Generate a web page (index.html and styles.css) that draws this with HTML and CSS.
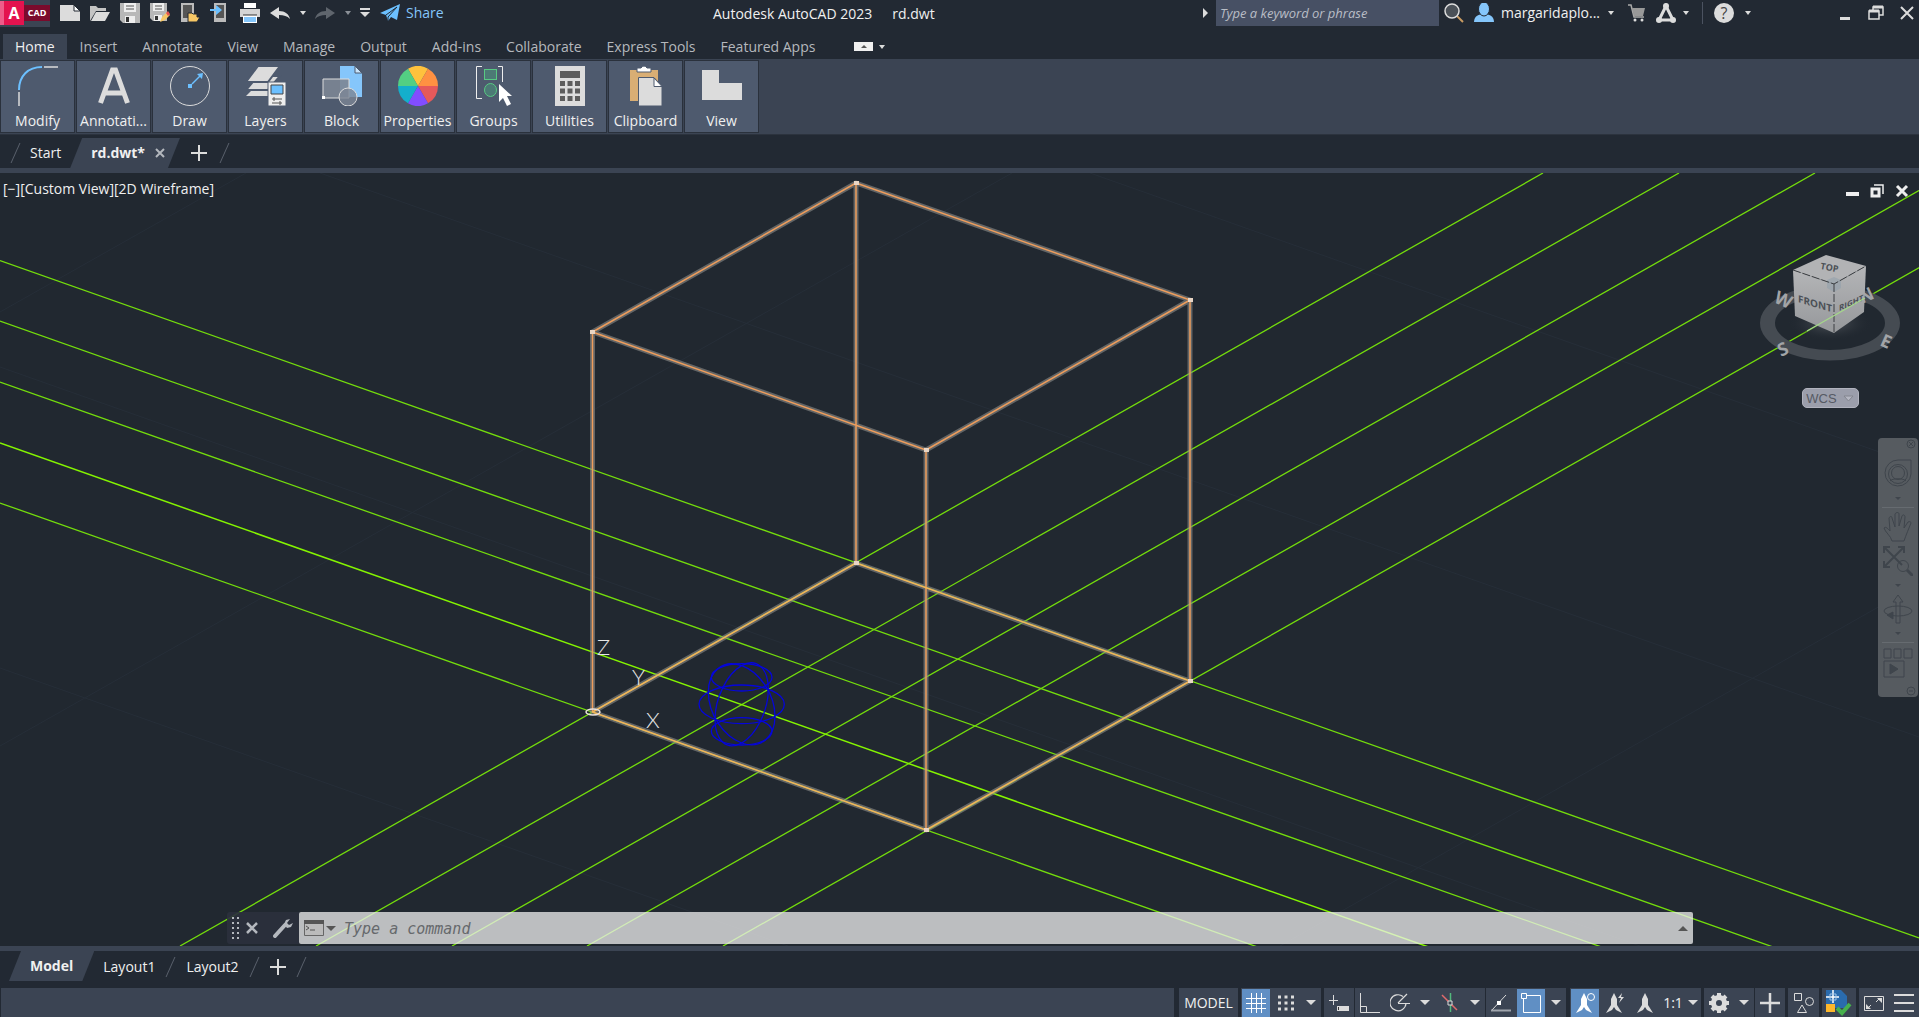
FILE: index.html
```
<!DOCTYPE html>
<html lang="en">
<head>
    <meta charset="UTF-8">
    <meta name="viewport" content="width=device-width, initial-scale=1.0">
    <title>Autodesk AutoCAD 2023 rd.dwt</title>
    <link rel="stylesheet" href="styles.css">
</head>
<body>
    <header class="titlebar">
        <div class="quick-access">
            <button class="app-btn" aria-label="Application menu"><span class="app-a">A</span><span class="app-cad">CAD</span></button>
            <button aria-label="New"><svg width="20" height="20" viewBox="0 0 20 20"><path d="M0 2h14l6 6v10H0z" fill="#dcdcdc"/><path d="M14 2v6h6z" fill="#fff" stroke="#222933"/></svg></button>
            <button aria-label="Open"><svg width="20" height="20" viewBox="0 0 20 20"><path d="M0 18V3h6l2 2h8v3H6z" fill="#c4c4c4"/><path d="M6 9h14l-5 9H1z" fill="#dcdcdc"/></svg></button>
            <button aria-label="Save"><svg width="20" height="20" viewBox="0 0 20 20"><path d="M0 0h20v20H3l-3-3z" fill="#b8b8b8"/><path d="M4 0h12v9H4zM5 13h10v7H5z" fill="#eee"/><path d="M6 3h8M6 6h8" stroke="#555" /><path d="M6 14h3v5H6z" fill="#333"/></svg></button>
            <button aria-label="Save as"><svg width="20" height="20" viewBox="0 0 20 20"><path d="M0 0h17v18H3l-3-3z" fill="#b8b8b8"/><path d="M3 0h11v8H3zM4 12h8v6H4z" fill="#eee"/><path d="M5 3h7M5 6h7" stroke="#555"/><path d="M5 13h3v4H5z" fill="#333"/><path d="M10 19l2-5 5-5 3 3-5 5z" fill="#f7c765"/><path d="M16 10l2-2 2 3-2 2z" fill="#e5524f"/></svg></button>
            <button aria-label="Open from web"><svg width="20" height="20" viewBox="0 0 20 20"><path d="M1 0h13v19H1z" fill="#bbb"/><path d="M3 2h9v13H3z" fill="#555"/><path d="M8 19v-9h4l1 1h4v3h3l-3 5z" fill="#f7c765" stroke="#222933"/></svg></button>
            <button aria-label="Save to web"><svg width="20" height="20" viewBox="0 0 20 20"><path d="M4 0h12v19H4z" fill="#bbb"/><path d="M6 2h8v13H6z" fill="#555"/><path d="M0 6h6V2l6 5-6 5V8H0z" fill="#6cc0ff"/></svg></button>
            <button aria-label="Plot"><svg width="20" height="20" viewBox="0 0 20 20"><path d="M4 0h12v5H4z" fill="#fff"/><path d="M0 6h20v8H0z" fill="#d4d4d4"/><path d="M3 12h14v8H3z" fill="#fff"/><path d="M4 14h12v5H4z" fill="#85c6fb"/><path d="M3 12h14" stroke="#333"/></svg></button>
            <button aria-label="Undo"><svg width="20" height="20" viewBox="0 0 20 20"><path d="M0 10l9-6v4c6 0 10 3 11 8-3-3-6-4-11-4v4z" fill="#dcdcdc"/></svg></button>
            <button class="mini" aria-label="Undo list"><span class="caret"></span></button>
            <button aria-label="Redo"><svg width="20" height="20" viewBox="0 0 20 20"><path d="M20 10l-9-6v4C5 8 1 11 0 16c3-3 6-4 11-4v4z" fill="#5f656d"/></svg></button>
            <button class="mini" aria-label="Redo list"><span class="caret dim"></span></button>
            <button class="mini" aria-label="Customize toolbar"><svg width="10" height="10" viewBox="0 0 10 10"><path d="M0 1h10" stroke="#dcdcdc" stroke-width="2"/><path d="M0 4h10L5 9z" fill="#dcdcdc"/></svg></button>
            <button class="share"><svg width="20" height="20" viewBox="0 0 20 20"><path d="M0 10L20 1l-3 16-6-3-3 4-2-6z" fill="#6cc0ff"/><path d="M6 12L17 4 8 14v4" fill="none" stroke="#222933"/></svg>Share</button>
        </div>
        <div class="window-title"><span>Autodesk AutoCAD 2023</span><span>rd.dwt</span></div>
        <div class="infocenter">
            <span class="play"></span>
            <input class="search" type="text" aria-label="Search" placeholder="Type a keyword or phrase">
            <button class="find" aria-label="Find"><svg width="20" height="20" viewBox="0 0 20 20"><path d="M13 13l6 6" stroke="#c99b63" stroke-width="2"/><circle cx="8" cy="8" r="7" fill="#4b5158" stroke="#dcdcdc" stroke-width="1.5"/></svg></button>
            <button class="account"><svg width="20" height="20" viewBox="0 0 20 20"><path d="M0 19c0-6 5-8 10-8s10 2 10 8z" fill="#85c6fb"/><ellipse cx="10" cy="6" rx="5.500" ry="7" fill="#85c6fb" stroke="#222933"/></svg><span class="account-name">margaridaplo...</span><span class="caret"></span></button>
            <button class="cart" aria-label="App store"><svg width="18" height="20" viewBox="0 0 18 20"><path d="M0 2h3l3 12h10" fill="none" stroke="#aaa" stroke-width="1.500"/><path d="M4 5h13l-2 8H6z" fill="#999"/><circle cx="7" cy="17" r="1.500" fill="#ddd"/><circle cx="14" cy="17" r="1.500" fill="#ddd"/></svg></button>
            <button class="adsk" aria-label="Autodesk"><svg width="20" height="20" viewBox="0 0 20 20"><path d="M10 3L3 17h14z" fill="none" stroke="#dcdcdc" stroke-width="3"/><circle cx="10" cy="3" r="3" fill="#dcdcdc"/><circle cx="3" cy="17" r="3" fill="#dcdcdc"/><circle cx="17" cy="17" r="3" fill="#dcdcdc"/></svg><span class="caret"></span></button>
            <button class="help" aria-label="Help"><span class="help-mark">?</span><span class="caret"></span></button>
        </div>
        <div class="window-buttons">
            <button aria-label="Minimize"><svg width="16" height="16" viewBox="0 0 16 16"><path d="M3 12h10v3H3z" fill="#dcdcdc"/></svg></button>
            <button aria-label="Restore"><svg width="16" height="16" viewBox="0 0 16 16"><path d="M5 5V2h10v8h-4M1 6h10v8H1z" fill="none" stroke="#dcdcdc" stroke-width="1.500"/><path d="M5 2h10M1 6h10" stroke="#dcdcdc" stroke-width="3"/></svg></button>
            <button aria-label="Close"><svg width="16" height="16" viewBox="0 0 16 16"><path d="M2 2l12 12M14 2L2 14" stroke="#dcdcdc" stroke-width="2"/></svg></button>
        </div>
    </header>

    <nav class="ribbon-tabs">
        <button class="active">Home</button>
        <button>Insert</button>
        <button>Annotate</button>
        <button>View</button>
        <button>Manage</button>
        <button>Output</button>
        <button>Add-ins</button>
        <button>Collaborate</button>
        <button>Express Tools</button>
        <button>Featured Apps</button>
        <button class="ribbon-toggle" aria-label="Minimize ribbon"><svg width="19" height="9" viewBox="0 0 19 9"><path d="M0 0h19v9H0z" fill="#f0f0f0"/><path d="M7 6h6L10 3z" fill="#555"/></svg><span class="caret"></span></button>
    </nav>

    <section class="ribbon">
        <button><svg width="40" height="40" viewBox="0 0 40 40" fill="none"><path d="M1 24C1 10 10 1 24 1" stroke="#6cc0ff" stroke-width="2"/><path d="M1 26v14M26 1h14" stroke="#dcdcdc" stroke-width="1.500"/></svg><span>Modify</span></button>
        <button><svg width="40" height="40" viewBox="0 0 40 40"><path d="M6.500 37L18.500 4h3l12 33M11 27h19" fill="none" stroke="#dcdcdc" stroke-width="5"/></svg><span>Annotati...</span></button>
        <button><svg width="40" height="40" viewBox="0 0 40 40"><circle cx="20" cy="20" r="19.500" fill="none" stroke="#dcdcdc"/><path d="M22 18l8-8" stroke="#6cc0ff" stroke-width="1.500"/><path d="M18 18h4v4h-4zM33 7l-1 6-5-5z" fill="#6cc0ff"/></svg><span>Draw</span></button>
        <button><svg width="40" height="40" viewBox="0 0 40 40"><path d="M12 18h22L22 30H0z" fill="#dcdcdc"/><path d="M12 10h22L22 24H0z" fill="#dcdcdc" stroke="#4e5a6e" stroke-width="2"/><path d="M12 0h22L22 16H0z" fill="#dcdcdc" stroke="#4e5a6e" stroke-width="2"/><path d="M22 16h18v24H22z" fill="#eee" stroke="#4e5a6e"/><path d="M25 19h12v9H25z" fill="#6cc0ff" stroke="#444"/><path d="M26 33h10M26 37h10M28 31v4M34 35v4" stroke="#555"/></svg><span>Layers</span></button>
        <button><svg width="40" height="40" viewBox="0 0 40 40"><path d="M18 0h15l7 7v24H18z" fill="#85c6fb"/><path d="M33 0v7h7z" fill="#c7e4fb" stroke="#4e5a6e"/><path d="M1 13h26v19H1z" fill="#7c8594" fill-opacity=".9" stroke="#dcdcdc"/><circle cx="26" cy="31" r="9" fill="#7c8594" fill-opacity=".8" stroke="#dcdcdc"/><path d="M0 30h3v3H0z" fill="#fff"/></svg><span>Block</span></button>
        <button><svg width="40" height="40" viewBox="0 0 40 40"><path d="M20 20L10 2.700A20 20 0 0 1 30 2.700z" fill="#ffc23d"/><path d="M20 20L30 2.700A20 20 0 0 1 40 20z" fill="#ff9142"/><path d="M20 20H40A20 20 0 0 1 30 37.300z" fill="#e5595b"/><path d="M20 20L30 37.300A20 20 0 0 1 10 37.300z" fill="#824dff"/><path d="M20 20L10 37.300A20 20 0 0 1 0 20z" fill="#14afcc"/><path d="M20 20H0A20 20 0 0 1 10 2.700z" fill="#53cf83"/></svg><span>Properties</span></button>
        <button><svg width="40" height="40" viewBox="0 0 40 40"><path d="M8 .5H2.500v32H8M24 .5h4.500V16" fill="none" stroke="#eee"/><rect x="10.500" y="3.500" width="12" height="10" fill="#4c7a75" stroke="#58ca83"/><ellipse cx="16.500" cy="24" rx="6" ry="6.500" fill="#4c7a75" stroke="#58ca83"/><path d="M25 18v18l4-4 4 8 4-2-4-8h5z" fill="#fff"/></svg><span>Groups</span></button>
        <button><svg width="40" height="40" viewBox="0 0 40 40"><path d="M5 0h30v40H5z" fill="#dcdcdc"/><path d="M10 5h20v7H10zM10 15h5v5h-5zM17.500 15h5v5h-5zM25 15h5v5h-5zM10 22.500h5v5h-5zM17.500 22.500h5v5h-5zM25 22.500h5v5h-5zM10 30h5v5h-5zM17.500 30h5v5h-5zM25 30h5v5h-5z" fill="#5c5c5c"/></svg><span>Utilities</span></button>
        <button><svg width="40" height="40" viewBox="0 0 40 40"><path d="M4 4h28v31H4z" fill="#d9ae74"/><path d="M11 6V2h4q3-4 6 0h4v4z" fill="#fff" stroke="#4e5a6e"/><path d="M12.500 11.500H28l8 9V40H12.500z" fill="#dcdcdc" stroke="#4e5a6e"/><path d="M28 12v8.500h8z" fill="#fff" stroke="#4e5a6e"/></svg><span>Clipboard</span></button>
        <button><svg width="40" height="40" viewBox="0 0 40 40"><path d="M0 4h17v13h23v17H0z" fill="#dcdcdc"/></svg><span>View</span></button>
    </section>

    <nav class="file-tabs">
        <i class="slash"></i>
        <button class="start">Start</button>
        <div class="file-tab"><button>rd.dwt*</button><button aria-label="Close drawing"><svg width="10" height="10" viewBox="0 0 10 10"><path d="M1 1l8 8M9 1L1 9" stroke="#b4b8be" stroke-width="2"/></svg></button></div>
        <button class="add" aria-label="New drawing"><svg width="16" height="16" viewBox="0 0 16 16"><path d="M8 0v16M0 8h16" stroke="#dcdcdc" stroke-width="2"/></svg></button>
        <i class="slash"></i>
    </nav>

    <main class="viewport">
        <svg class="drawing" viewBox="0 173 1919 773" preserveAspectRatio="xMidYMid slice" fill="none">
            <!-- background grid -->
            <g stroke="#262e38">
                <path d="M0 746L1012 173M1280 946L1919 584M0 312L246 173M320 173L1919 737M1090 173L1919 466M0 668L788 946M0 367L1640 946"/>
            </g>
            <!-- construction lines -->
            <g stroke="#74dd0c" stroke-width="1.300">
                <path d="M0 260.500L1919 938M0 321L1919 998.500M0 382L1919 1059M0 503L1919 1180.500"/>
                <path d="M180 946L1543 173M316 946L1679 173M452 946L1815 173M587 946L1950 173M723 946L2086 173"/>
                <path d="M0 443L1919 1120" stroke="#85f500" stroke-width="1.500"/>
            </g>
            <!-- sphere -->
            <g transform="translate(560 620) scale(.33333)" stroke="#0505dc" stroke-width="1.300">
                <ellipse cx="545" cy="172" rx="91" ry="41" vector-effect="non-scaling-stroke"/>
                <ellipse cx="545" cy="253" rx="128" ry="58" vector-effect="non-scaling-stroke"/>
                <ellipse cx="545" cy="334" rx="91" ry="41" vector-effect="non-scaling-stroke"/>
                <circle r="1" transform="matrix(80 -45 0 -116 545 253)" vector-effect="non-scaling-stroke"/>
                <circle r="1" transform="matrix(-100 -36 0 116 545 253)" vector-effect="non-scaling-stroke"/>
            </g>
            <!-- selected cube -->
            <g stroke-linejoin="round">
                <path d="M592.500 332L856 183L1190 300L926 450zM592.500 712L856 563L1190 681L926 830zM592.500 332V712M856 183V563M1190 300V681M926 450V830" stroke="#8d8d8b" stroke-opacity=".6" stroke-width="5"/>
                <path d="M592.500 332L856 183L1190 300L926 450zM592.500 332V712M856 183V563M1190 300V681M926 450V830" stroke="#ee9d5c" stroke-width="1.500"/>
                <path d="M592.500 712L856 563L1190 681L926 830z" stroke="#f2b45a" stroke-width="1.500"/>
                <path d="M590 332h5M854 183h5M1188 300h5M924 450h5M854 563h5M1188 681h5M924 830h5" stroke="#e8d5c5" stroke-width="4"/>
            </g>
            <ellipse cx="593" cy="712" rx="7" ry="3" stroke="#e8e0dc" stroke-width="1.500"/>
            <g class="ucs">
                <text x="597" y="655">Z</text>
                <text x="632" y="685">Y</text>
                <text x="646" y="728">X</text>
            </g>
        </svg>

        <div class="view-label">[−][Custom View][2D Wireframe]</div>

        <div class="mdi-buttons">
            <button aria-label="Minimize view"><svg width="14" height="14" viewBox="0 0 14 14"><path d="M1 8h13v4H1z" fill="#eee"/></svg></button>
            <button aria-label="Restore view"><svg width="14" height="14" viewBox="0 0 14 14" fill="none" stroke="#eee"><path d="M4 1h9v9" stroke-width="1.500"/><path d="M2 5h7v7H2z" stroke-width="3"/></svg></button>
            <button aria-label="Close view"><svg width="14" height="14" viewBox="0 0 14 14"><path d="M2 2l10 10M12 2L2 12" stroke="#eee" stroke-width="3"/></svg></button>
        </div>

        <div class="viewcube">
            <svg width="150" height="115" viewBox="0 0 150 115">
                <defs>
                    <linearGradient id="face" x1="0" y1="0" x2="0" y2="1"><stop offset="0" stop-color="#b4b5b7"/><stop offset="1" stop-color="#96989b"/></linearGradient>
                    <radialGradient id="shade"><stop offset="0" stop-color="#555a60"/><stop offset="1" stop-color="#212830" stop-opacity="0"/></radialGradient>
                </defs>
                <path fill-rule="evenodd" d="M5 73a70 37.500 0 0 1 140 0a70 37.500 0 0 1-140 0zM20 73a55 27 0 0 0 110 0a55 27 0 0 0-110 0z" fill="#454b52"/>
                <ellipse cx="75" cy="73" rx="42" ry="18" fill="url(#shade)"/>
                <g class="compass">
                    <text transform="translate(18 52) rotate(24)">W</text>
                    <text transform="translate(107 54) rotate(-24)">N</text>
                    <text transform="translate(26 107) rotate(-25)">S</text>
                    <text transform="translate(124 95) rotate(24)">E</text>
                </g>
                <path d="M38 20L71 5l40 11-32 18z" fill="#b2b3b5"/>
                <path d="M38 20l41 14v49L40 66z" fill="url(#face)"/>
                <path d="M111 16L79 34v49l30-21z" fill="url(#face)"/>
                <path d="M72 30l7-3 7 3v8l-7 4-7-4z" fill="#92a0ac" fill-opacity=".6"/>
                <path d="M38 20l41 14 32-18M79 34v49" fill="none" stroke="#3c3f43" stroke-dasharray="8 2"/>
                <g class="faces">
                    <text transform="translate(65 19) rotate(10)" font-size="9">TOP</text>
                    <text transform="translate(43 52) skewY(17)" font-size="10">FRONT</text>
                    <text transform="translate(84 61) skewY(-24)" font-size="8">RIGHT</text>
                </g>
                <path d="M52 81L110 48" stroke="#a5d88a" stroke-width="1.300"/>
            </svg>
            <button class="wcs">WCS<svg width="11" height="7" viewBox="0 0 11 7"><path d="M1 1h9L5.500 6z" fill="#b5b7c2" stroke="#83868f"/></svg></button>
        </div>

        <div class="navbar">
            <button class="corner" aria-label="Close navigation bar"><svg width="10" height="10" viewBox="0 0 10 10"><circle cx="5" cy="5" r="4"/><path d="M3 3l4 4M7 3L3 7"/></svg></button>
            <button class="wheel" aria-label="Steering wheel"><svg width="30" height="30" viewBox="0 0 30 30"><path d="M15 1h13v14a13 13 0 1 1-13-14z"/><circle cx="15" cy="15" r="9.500"/><circle cx="15" cy="14" r="6.500"/><path d="M7 22c2-3 14-3 16 0"/></svg></button>
            <span class="nav-caret"></span>
            <hr>
            <button aria-label="Pan"><svg width="30" height="30" viewBox="0 0 30 30"><path d="M9 29c-1-5-7-9-8-13 2-2 4 1 6 3L6 6c1-2 3-2 3 0l3 9V2c1-2 4-2 4 0v12l3-10c1-2 3-1 3 1l-1 11 4-6c2-1 3 0 3 1-2 5-5 12-7 18z"/></svg></button>
            <button aria-label="Zoom"><svg width="30" height="30" viewBox="0 0 30 30"><path d="M2 2l17 17M20 2L2 20M1 7V1h6M15 1h6v6M1 15v6h6" stroke-width="2"/><circle cx="20" cy="20" r="5.500"/><path d="M24 24l6 6" stroke-width="3"/></svg></button>
            <span class="nav-caret"></span>
            <button aria-label="Orbit"><svg width="30" height="30" viewBox="0 0 30 30"><ellipse cx="15" cy="17" rx="14" ry="5"/><path d="M13 29V8h-3l5-7 5 7h-3v21z"/><path d="M4 21l6-3v7z" fill="#3f454c"/></svg></button>
            <span class="nav-caret"></span>
            <hr>
            <button aria-label="ShowMotion"><svg width="30" height="32" viewBox="0 0 30 32"><path d="M1 2h7v9H1zM11 2h7v9h-7zM21 2h8v9h-8zM1 14h20v16H1z"/><path d="M7 17v10l8-5z" fill="#3f454c"/></svg></button>
            <button class="corner bottom" aria-label="Navigation bar options"><svg width="10" height="10" viewBox="0 0 10 10"><circle cx="5" cy="5" r="4"/><path d="M3 5h4"/></svg></button>
        </div>

        <div class="command">
            <div class="command-tools">
                <svg width="8" height="22" viewBox="0 0 8 22"><path d="M2 0v22M7 0v22" stroke="#b4b8be" stroke-width="2" stroke-dasharray="2 3"/></svg>
                <button aria-label="Close command line"><svg width="12" height="12" viewBox="0 0 12 12"><path d="M1 1l10 10M11 1L1 11" stroke="#b4b8be" stroke-width="2.500"/></svg></button>
                <button class="wrench" aria-label="Customize"><svg width="20" height="20" viewBox="0 0 20 20"><path d="M2 18l10-11" stroke="#b4b8be" stroke-width="4" stroke-linecap="round"/><path d="M17 1l-4 1-2 4 3 4 4-1 2-4-4 2-2-2z" fill="#b4b8be"/></svg></button>
            </div>
            <div class="command-line">
                <button aria-label="Recent commands"><svg width="20" height="16" viewBox="0 0 20 16"><path d="M.5.500h19v15H.500z" fill="#bbb" stroke="#666"/><path d="M0 0h20v4H0z" fill="#555"/><path d="M2 6l3 2-3 2M6 10h5" fill="none" stroke="#555"/></svg><span class="caret dark"></span></button>
                <input type="text" aria-label="Command" placeholder="Type a command">
                <button aria-label="Command history"><span class="caret dark up"></span></button>
            </div>
        </div>
    </main>

    <nav class="layout-tabs">
        <button class="model-tab">Model</button>
        <button>Layout1</button>
        <i class="slash"></i>
        <button>Layout2</button>
        <i class="slash"></i>
        <button class="add" aria-label="New layout"><svg width="16" height="16" viewBox="0 0 16 16"><path d="M8 0v16M0 8h16" stroke="#dcdcdc" stroke-width="2"/></svg></button>
        <i class="slash"></i>
    </nav>

    <footer class="statusbar">
        <div class="coords"></div>
        <div class="group"><button class="model">MODEL</button></div>
        <div class="group">
            <button class="on" aria-label="Grid"><svg width="20" height="20" viewBox="0 0 20 20"><path d="M5.500 0v20M10.500 0v20M15.500 0v20M0 5.500h20M0 10.500h20M0 15.500h20" stroke="#fff"/></svg></button>
            <button aria-label="Snap"><svg width="20" height="20" viewBox="0 0 20 20"><path d="M2 4h16M2 10h16M2 16h16" stroke="#dcdcdc" stroke-width="3" stroke-dasharray="3 3.500"/></svg></button>
            <button class="drop" aria-label="Snap settings"><span class="caret big"></span></button>
        </div>
        <div class="group">
            <button aria-label="Dynamic input"><svg width="20" height="20" viewBox="0 0 20 20"><path d="M4.500 2v10M0 7.500h9" stroke="#dcdcdc"/><path d="M8 13h12v5H8z" fill="#dcdcdc"/><path d="M9 14h1v3H9z" fill="#333"/></svg></button>
        </div>
        <div class="group near">
            <button aria-label="Ortho"><svg width="20" height="20" viewBox="0 0 20 20"><path d="M.5 0v19.500H20M.5 13.500h6v6" fill="none" stroke="#dcdcdc"/></svg></button>
            <button aria-label="Polar tracking"><svg width="20" height="20" viewBox="0 0 20 20"><path d="M13 3.500a8 8 0 1 0 3 7M8 10.500h12M8 10l9-9" fill="none" stroke="#dcdcdc" stroke-width="1.200"/></svg></button>
            <button class="drop" aria-label="Polar settings"><span class="caret big"></span></button>
            <button aria-label="Isodraft"><svg width="20" height="20" viewBox="0 0 20 20"><path d="M10.500 0v19" stroke="#53b97c" stroke-width="1.500"/><path d="M2 2l15 15" stroke="#e06a6c" stroke-width="1.500"/><path d="M8 8h4v4H8z" fill="#3b4453" stroke="#dcdcdc"/></svg></button>
            <button class="drop" aria-label="Isodraft settings"><span class="caret big"></span></button>
        </div>
        <div class="group near">
            <button aria-label="Object snap tracking"><svg width="20" height="20" viewBox="0 0 20 20"><path d="M1 17L15 2" stroke="#dcdcdc"/><path d="M0 17.500h20" stroke="#a0a5ad" stroke-width="2"/><path d="M6 8h4v4H6z" fill="#fff"/></svg></button>
            <button class="on" aria-label="Object snap"><svg width="20" height="20" viewBox="0 0 20 20" fill="none" stroke="#fff"><path d="M6 2.500h13.500v17H2.500V6"/><path d="M.5.500h5v5h-5z"/></svg></button>
            <button class="drop" aria-label="Object snap settings"><span class="caret big"></span></button>
        </div>
        <div class="group far">
            <button class="on" aria-label="Annotation visibility"><svg width="20" height="20" viewBox="0 0 20 20"><path d="M9 0l3 6v6l5 8-6-3-2-3-2 3-6 3 5-8V6z" fill="#fff"/><circle cx="16" cy="4" r="3.500" fill="none" stroke="#fff"/></svg></button>
            <button aria-label="Auto scale"><svg width="20" height="20" viewBox="0 0 20 20"><path d="M9 0l3 6v6l5 8-6-3-2-3-2 3-6 3 5-8V6z" fill="#dcdcdc"/><path d="M17 0l-4 5h3l-2 5 5-6h-3z" fill="#dcdcdc"/></svg></button>
            <button aria-label="Annotation scale icon"><svg width="20" height="20" viewBox="0 0 20 20"><path d="M10 0l3 6v6l5 8-6-3-2-3-2 3-6 3 5-8V6z" fill="#dcdcdc"/></svg></button>
            <button class="scale">1:1<span class="caret big"></span></button>
        </div>
        <div class="group">
            <button aria-label="Workspace"><svg width="20" height="20" viewBox="0 0 20 20"><circle cx="10" cy="10" r="5.500" fill="none" stroke="#dcdcdc" stroke-width="5"/><path d="M10 0v4M10 16v4M0 10h4M16 10h4M3 3l3 3M14 14l3 3M17 3l-3 3M6 14l-3 3" stroke="#dcdcdc" stroke-width="4"/></svg></button>
            <button class="drop" aria-label="Workspace settings"><span class="caret big"></span></button>
        </div>
        <div class="group near"><button aria-label="Annotation monitor"><svg width="20" height="20" viewBox="0 0 20 20"><path d="M10 0v20M0 10h20" stroke="#dcdcdc" stroke-width="2.500"/></svg></button></div>
        <div class="group"><button class="isolate" aria-label="Isolate objects"><svg width="20" height="20" viewBox="0 0 20 20" fill="none" stroke="#dcdcdc"><path d="M.5.500h7v7h-7zM8 12l4.500 7.500h-9z"/><circle cx="15.500" cy="8.500" r="4"/></svg></button></div>
        <div class="group"><button class="wide" aria-label="Graphics performance"><svg width="26" height="26" viewBox="0 0 26 26"><path d="M0 0h15l6 6v12H9v4H0z" fill="#2a6bad"/><path d="M0 14h9v8H0z" fill="#fdb72b"/><path d="M0 7h13M7 0v13" stroke="#fff" stroke-width="1.500"/><path d="M4 4h6v6H4z" fill="none" stroke="#9fc6ea"/><path d="M11 18l5 5 8-9" fill="none" stroke="#46b04c" stroke-width="4"/></svg></button></div>
        <div class="group">
            <button aria-label="Clean screen"><svg width="20" height="20" viewBox="0 0 20 20" fill="none" stroke="#dcdcdc"><path d="M.5 3.500h19v14H.5z"/><path d="M12 9l4-4M7 12l-4 4"/><path d="M13 5h5v5zM2 11v5h5z" fill="#dcdcdc" stroke="none"/></svg></button>
            <button aria-label="Customization"><svg width="20" height="20" viewBox="0 0 20 20"><path d="M0 2h20M0 10h20M0 18h20" stroke="#dcdcdc" stroke-width="2"/></svg></button>
        </div>
    </footer>
</body>
</html>
```
FILE: styles.css
```
* {
    box-sizing: border-box;
}
body {
    font-family: "Open Sans", "Noto Sans", sans-serif;
    font-size: 14px;
    line-height: 20px;
    color: #f0f0f0;
    background-color: #222933;
    margin: 0;
    height: 100vh;
    display: flex;
    flex-direction: column;
    overflow: hidden;
}
button {
    display: flex;
    align-items: center;
    justify-content: center;
    font: inherit;
    color: inherit;
    background: none;
    border: none;
    padding: 0;
    white-space: nowrap;
}
input {
    border: none;
    outline: none;
    min-width: 0;
}
svg {
    display: block;
    flex: none;
}

/* small drop-down arrows */
.caret {
    border: 3px solid transparent;
    border-top: 4px solid #dcdcdc;
    border-bottom: 0;
}
.caret.dim {
    border-top-color: #8b9097;
}
.caret.big {
    border-width: 5px 5px 0;
}
.caret.dark {
    border-width: 5px 5px 0;
    border-top-color: #555;
}
.caret.up {
    transform: rotate(180deg);
}

/* title bar */
.titlebar {
    height: 34px;
    flex: none;
    display: flex;
    align-items: flex-start;
    position: relative;
}
.quick-access {
    display: flex;
    align-items: center;
    gap: 10px;
    height: 26px;
}
.app-btn {
    width: 50px;
    height: 27px;
    color: #fff;
    font-weight: bold;
    background-color: #3b4453;
}
.app-a {
    width: 24px;
    height: 24px;
    line-height: 24px;
    font-size: 16px;
    background-color: #e4134f;
    border-left: 4px solid #ee5c8a;
}
.app-cad {
    flex: 1;
    height: 16px;
    line-height: 16px;
    font-size: 9px;
    background-color: #7a0b2c;
}
.mini {
    width: 5px;
}
.mini + .mini {
    width: 10px;
}
.share {
    gap: 6px;
    color: #85c6fb;
}
.window-title {
    position: absolute;
    left: 713px;
    top: 4px;
    display: flex;
    gap: 20px;
}
.infocenter {
    display: flex;
    align-items: center;
    height: 26px;
    margin-left: auto;
}
.play {
    border: 5px solid transparent;
    border-left: 5px solid #dcdcdc;
    border-right: 0;
    margin-right: 8px;
}
.search {
    width: 223px;
    height: 26px;
    padding: 0 4px;
    font: italic 13px "Open Sans", sans-serif;
    background-color: #475064;
    color: #fff;
}
.search::placeholder {
    color: #b9bdc6;
    opacity: 1;
}
.find {
    margin: 0 10px 0 5px;
}
.account {
    gap: 7px;
    width: 140px;
    justify-content: flex-start;
}
.account-name {
    flex: 1;
    text-align: left;
}
.cart {
    margin-left: 14px;
}
.adsk {
    margin-left: 10px;
    gap: 7px;
}
.help {
    gap: 11px;
    height: 22px;
    margin-left: 13px;
    padding-left: 11px;
    border-left: 1px solid #4b5260;
}
.help-mark {
    width: 20px;
    border-radius: 50%;
    background-color: #dcdcdc;
    color: #444;
    font-size: 16px;
}
.window-buttons {
    display: flex;
    align-items: center;
    gap: 15px;
    height: 26px;
    padding: 0 4px 0 86px;
}

/* ribbon */
.ribbon-tabs {
    display: flex;
    flex: none;
    gap: 1px;
    height: 25px;
    padding-left: 3px;
}
.ribbon-tabs button {
    padding: 0 12px;
    color: #b5b8bd;
}
.ribbon-tabs .active {
    color: #f0f0f0;
    background-color: #3b4453;
}
.ribbon-tabs .ribbon-toggle {
    gap: 6px;
    padding: 0 26px;
}
.ribbon {
    display: flex;
    flex: none;
    gap: 1px;
    height: 76px;
    padding: 1px 0;
    background-color: #3b4453;
    border-bottom: 1px solid #2c333e;
}
.ribbon button {
    flex-direction: column;
    width: 75px;
    gap: 5px;
    padding-top: 3px;
    background-color: #4e5a6e;
    border: 1px solid #2a313c;
}

/* drawing tabs and layout tabs */
.file-tabs,
.layout-tabs {
    display: flex;
    flex: none;
    align-items: center;
}
.file-tabs {
    height: 38px;
    padding: 2px 0 0 15px;
    border-bottom: 5px solid #3b4453;
}
.slash {
    width: 1px;
    height: 20px;
    background-color: #5a616d;
    transform: skewX(-24deg);
}
.start {
    margin: 0 9px 0 14px;
}
.file-tab {
    display: flex;
    align-self: flex-end;
    gap: 10px;
    height: 30px;
    padding: 0 15px 0 21px;
    font-weight: bold;
    background-color: #3b4453;
    clip-path: polygon(12px 0, 100% 0, calc(100% - 12px) 100%, 0 100%);
}
.add {
    margin: 0 17px 0 11px;
}
.layout-tabs {
    height: 42px;
    padding: 0 0 5px 9px;
    border-top: 5px solid #3b4453;
}
.layout-tabs .model-tab {
    align-self: flex-start;
    height: 30px;
    padding: 0 21px;
    font-weight: bold;
    background-color: #3b4453;
    clip-path: polygon(12px 0, 100% 0, calc(100% - 12px) 100%, 0 100%);
}
.layout-tabs .model-tab + button {
    margin-left: 9px;
}
.layout-tabs .slash {
    margin: 0 15px;
}
.layout-tabs .add {
    margin: 0;
}

/* drawing area */
.viewport {
    flex: 1;
    min-height: 0;
    position: relative;
    background-color: #212830;
    overflow: hidden;
}
.drawing {
    width: 100%;
    height: 100%;
}
.ucs {
    font-family: Lato, sans-serif;
    font-weight: 300;
    font-size: 22px;
    fill: #e6e6e6;
}
.view-label {
    position: absolute;
    left: 3px;
    top: 6px;
}
.mdi-buttons {
    position: absolute;
    right: 10px;
    top: 11px;
    display: flex;
    gap: 11px;
}
.viewcube {
    position: absolute;
    right: 14px;
    top: 77px;
    display: flex;
    flex-direction: column;
    align-items: center;
    gap: 23px;
}
.compass {
    font-size: 18px;
    font-weight: bold;
    fill: #a2a4a7;
}
.faces {
    font-weight: bold;
    fill: #4b5056;
}
.wcs {
    width: 57px;
    height: 20px;
    gap: 6px;
    font: 13px "Liberation Sans", sans-serif;
    color: #565a64;
    background-color: #9b9eab;
    border: 1px solid #b1b3be;
    border-radius: 5px;
}
.navbar {
    position: absolute;
    right: 1px;
    top: 265px;
    width: 40px;
    padding: 1px 2px;
    display: flex;
    flex-direction: column;
    align-items: center;
    gap: 4px;
    background-color: #565b60;
    border-radius: 4px;
}
.navbar svg {
    fill: none;
    stroke: #3f454c;
}
.navbar hr {
    width: 32px;
    margin: 0;
    border: none;
    border-top: 1px solid #666b70;
}
.navbar .corner {
    align-self: flex-end;
}
.navbar .bottom {
    margin-top: 3px;
}
.wheel {
    margin-top: 6px;
}
.nav-caret {
    margin: 4px 0 3px;
    border: 3px solid transparent;
    border-top: 3px solid #3f454c;
    border-bottom: 0;
}
.command {
    position: absolute;
    left: 227px;
    right: 226px;
    bottom: 2px;
    height: 32px;
    display: flex;
}
.command-tools {
    width: 72px;
    display: flex;
    align-items: center;
    gap: 7px;
    padding-left: 4px;
    background-color: rgba(43, 48, 61, 0.9);
    border-radius: 3px 0 0 3px;
}
.wrench {
    margin-left: 8px;
}
.command-line {
    flex: 1;
    display: flex;
    padding: 0 5px;
    background-color: rgba(240, 240, 240, 0.75);
    border-radius: 2px;
}
.command-line button {
    gap: 2px;
}
.command-line input {
    flex: 1;
    padding: 1px 8px 0;
    background: none;
    font: italic 15px "DejaVu Sans Mono", monospace;
}
.command-line input::placeholder {
    color: #66696c;
    opacity: 1;
}

/* status bar */
.statusbar {
    display: flex;
    flex: none;
    gap: 3px;
    height: 29px;
    padding-left: 1px;
}
.coords {
    flex: 1;
    margin-right: 2px;
    background-color: #3b4453;
}
.group {
    display: flex;
    background-color: #3b4453;
}
.group.near {
    margin-left: -2px;
}
.group.far {
    margin-left: 1px;
}
.group button {
    width: 30px;
}
.group .on {
    background-color: #608fc4;
    border: 1px solid #3b4453;
    border-bottom: none;
}
.group .drop {
    width: 20px;
}
.group .model {
    width: 59px;
}
.group .scale {
    width: 41px;
    gap: 5px;
}
.group .isolate {
    width: 31px;
}
.group .wide {
    width: 34px;
}
```
